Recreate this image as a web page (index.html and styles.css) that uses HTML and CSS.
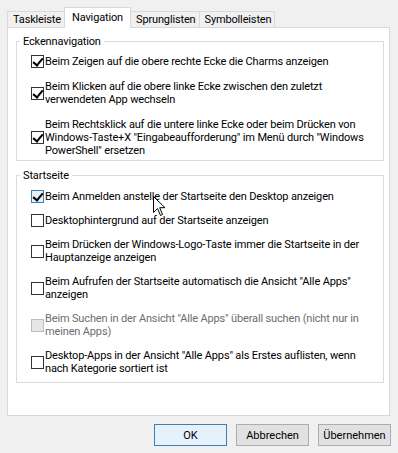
FILE: index.html
```html
<!DOCTYPE html>
<html lang="de">
<head>
    <meta charset="utf-8">
    <title>Eigenschaften von Taskleiste und Navigation</title>
    <link rel="stylesheet" href="styles.css">
</head>
<body>
    <div class="dialog">
        <div class="tabs">
            <div class="tab">Taskleiste</div>
            <div class="tab active">Navigation</div>
            <div class="tab">Sprunglisten</div>
            <div class="tab">Symbolleisten</div>
        </div>

        <div class="panel">
            <fieldset class="group">
                <legend>Eckennavigation</legend>
                <div class="options">
                    <label class="check">
                        <span class="box checked"></span>
                        <span class="text">Beim Zeigen auf die obere rechte Ecke die Charms anzeigen</span>
                    </label>
                    <label class="check">
                        <span class="box checked"></span>
                        <span class="text">Beim Klicken auf die obere linke Ecke zwischen den zuletzt<br>verwendeten App wechseln</span>
                    </label>
                    <label class="check">
                        <span class="box checked"></span>
                        <span class="text">Beim Rechtsklick auf die untere linke Ecke oder beim Drücken von<br>Windows-Taste+X "Eingabeaufforderung" im Menü durch "Windows<br>PowerShell" ersetzen</span>
                    </label>
                </div>
            </fieldset>

            <fieldset class="group group-start">
                <legend>Startseite</legend>
                <div class="options">
                    <label class="check">
                        <span class="box checked hover"></span>
                        <span class="text">Beim Anmelden anstelle der Startseite den Desktop anzeigen</span>
                    </label>
                    <label class="check">
                        <span class="box"></span>
                        <span class="text">Desktophintergrund auf der Startseite anzeigen</span>
                    </label>
                    <label class="check">
                        <span class="box"></span>
                        <span class="text">Beim Drücken der Windows-Logo-Taste immer die Startseite in der<br>Hauptanzeige anzeigen</span>
                    </label>
                    <label class="check">
                        <span class="box"></span>
                        <span class="text">Beim Aufrufen der Startseite automatisch die Ansicht "Alle Apps"<br>anzeigen</span>
                    </label>
                    <label class="check disabled">
                        <span class="box"></span>
                        <span class="text">Beim Suchen in der Ansicht "Alle Apps" überall suchen (nicht nur in<br>meinen Apps)</span>
                    </label>
                    <label class="check">
                        <span class="box"></span>
                        <span class="text">Desktop-Apps in der Ansicht "Alle Apps" als Erstes auflisten, wenn<br>nach Kategorie sortiert ist</span>
                    </label>
                </div>
            </fieldset>
        </div>

        <div class="buttons">
            <button class="btn btn-default">OK</button>
            <button class="btn">Abbrechen</button>
            <button class="btn">Übernehmen</button>
        </div>

        <svg class="cursor" width="13" height="21" viewBox="0 0 13 21">
            <path d="M0.5 0.5 L0.5 16.5 L4.5 12.5 L7.5 19.5 L9.5 18.5 L6.7 11.7 L12 11.7 Z" fill="#fff" stroke="#000" stroke-width="1"/>
        </svg>
    </div>
</body>
</html>
```

FILE: styles.css
```css
* {
    box-sizing: border-box;
}

body {
    margin: 0;
    background: #f0f0f0;
    font-family: "Roboto", "Liberation Sans", sans-serif;
    font-size: 11px;
    letter-spacing: -0.15px;
    color: #000;
}

.dialog {
    position: relative;
    width: 398px;
    height: 453px;
}

/* tab strip */
.tabs {
    display: flex;
    align-items: flex-end;
    padding: 7px 0 0 7px;
    height: 27px;
}

.tab {
    height: 16px;
    line-height: 16px;
    padding: 0 3px 0 5px;
    border: 1px solid #d9d9d9;
    border-bottom: none;
    margin-right: -1px;
    background: #f0f0f0;
}

.tab.active {
    position: relative;
    z-index: 1;
    height: 21px;
    line-height: 19px;
    background: #fff;
    margin-bottom: -1px;
    padding: 0 7px;
}

.panel {
    margin-left: 7px;
    width: 383px;
    height: 389px;
    background: #fff;
    border: 1px solid #d9d9d9;
    padding: 7px 5px 0 8px;
}

/* group boxes */
.group {
    margin: 0;
    min-width: 0;
    border: 1px solid #dcdcdc;
    padding: 0;
}

.group legend {
    padding: 0 3px;
    margin-left: 3px;
    line-height: 13px;
}

.options {
    display: flex;
    flex-direction: column;
    gap: 12px;
    padding: 7px 5px 3px 14px;
}

.group-start {
    margin-top: 8px;
}

.group-start .options {
    gap: 11px;
    padding-top: 8px;
    padding-bottom: 7px;
}

.check {
    display: flex;
    align-items: center;
    gap: 1px;
    line-height: 13px;
}

.box {
    flex: none;
    width: 13px;
    height: 13px;
    border: 1px solid #333;
    background: #fff;
    position: relative;
}

.box.checked::after {
    content: "";
    position: absolute;
    left: 3px;
    top: 0px;
    width: 4px;
    height: 8px;
    border: solid #000;
    border-width: 0 2px 2px 0;
    transform: rotate(40deg);
}

.box.hover {
    border-color: #3c7fb1;
    background: #e5f1fb;
}

.text {
    white-space: nowrap;
}

.check.disabled {
    color: #6d6d6d;
}

.check.disabled .box {
    border-color: #bcbcbc;
    background: #e6e6e6;
}

/* dialog buttons */
.buttons {
    display: flex;
    justify-content: flex-end;
    gap: 9px;
    padding: 8px 7px 0 0;
}

.btn {
    width: 73px;
    height: 22px;
    border: 1px solid #adadad;
    background: #e1e1e1;
    font-family: inherit;
    font-size: 11px;
    color: #000;
    padding: 0;
}

.btn-default {
    border-color: #3c7fb1;
    background: #e5f1fb;
}

.cursor {
    position: absolute;
    left: 153px;
    top: 196px;
}
```
